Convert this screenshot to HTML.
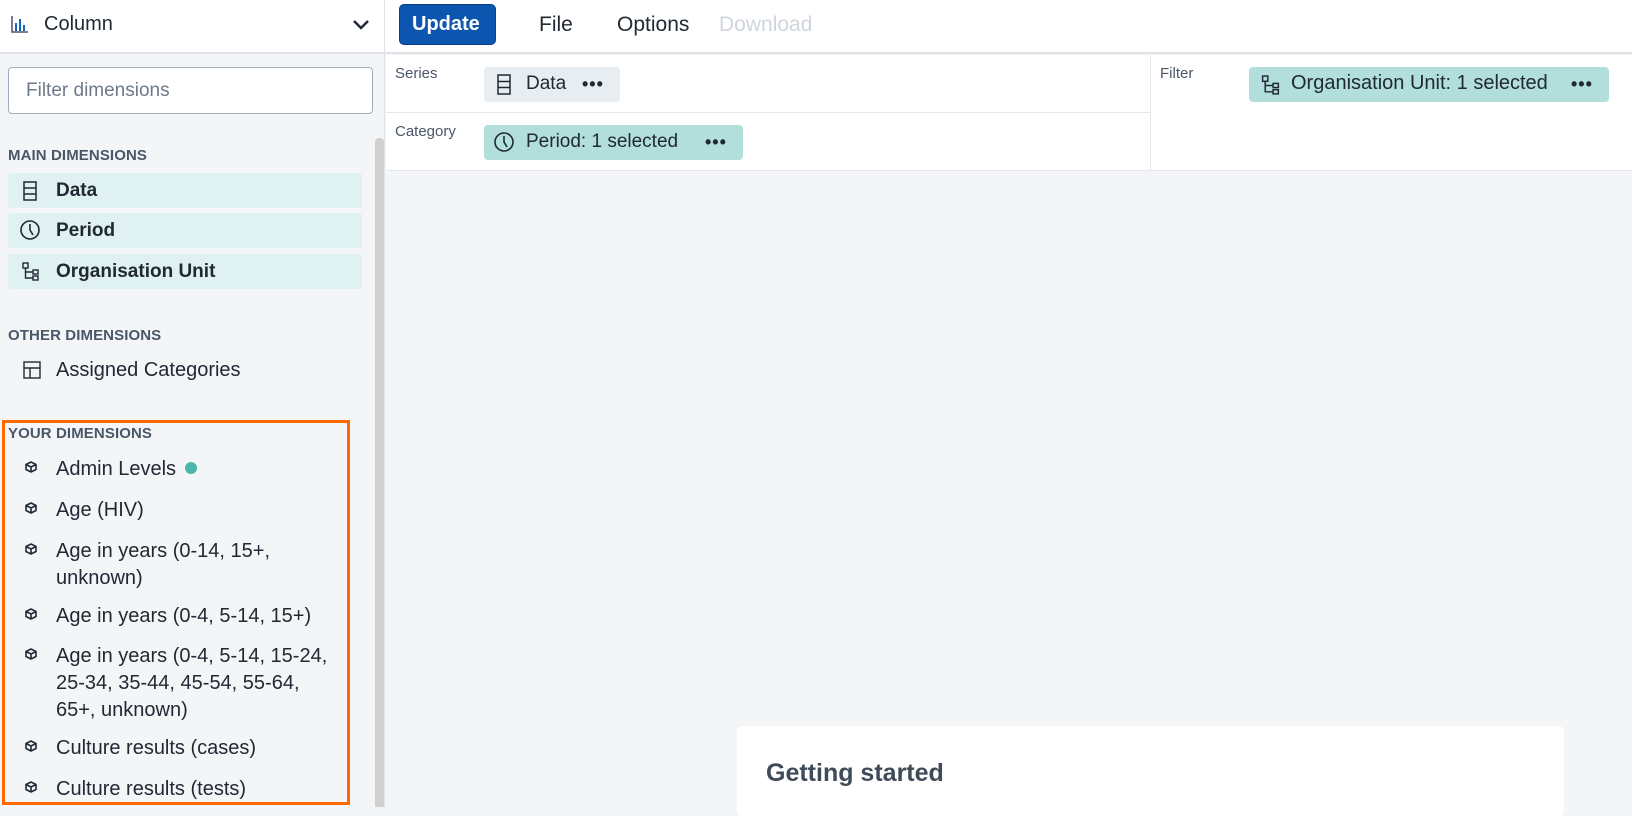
<!DOCTYPE html>
<html><head><meta charset="utf-8"><style>
*{box-sizing:border-box;margin:0;padding:0}
body{width:1632px;height:807px;overflow:hidden;font-family:"Liberation Sans",sans-serif;color:#212934;background:#f3f5f7;position:relative}
.abs{position:absolute}
.hdr{left:0;top:0;width:1632px;height:54px;background:#fff;border-bottom:2px solid #dfe3e7}
.side{left:0;top:54px;width:385px;height:753px;background:#f3f5f7;border-right:1px solid #e0e4e8}
.t{position:absolute;white-space:nowrap}
.row{position:absolute;left:8px;width:354px;height:35px;background:#e0f1f1;border-radius:3px}
.row span{position:absolute;left:48px;top:7px;font-size:19px;font-weight:bold}
.row svg{position:absolute;left:14px;top:8px}
.sec{font-size:15px;font-weight:bold;color:#4a5768;letter-spacing:.1px}
.it{position:absolute;left:56px;font-size:20px;line-height:27px;color:#212934;white-space:nowrap}
.cube{position:absolute;left:25px}
.chip{position:absolute;height:35px;border-radius:4px;font-size:19px}
.chip span{position:absolute;top:6px;left:42px;white-space:nowrap}
.dots{position:absolute;font-size:18px;font-weight:bold;letter-spacing:1px}
</style></head><body>
<div class="abs hdr"></div>
<div class="abs" style="left:384px;top:0;width:1px;height:54px;background:#dfe3e7"></div>
<svg class="abs" style="left:11px;top:15px" width="18" height="18" viewBox="0 0 18 18"><path d="M1 1V17H17" stroke="#4a5768" stroke-width="1.5" fill="none"/><rect x="4" y="8" width="2" height="8" fill="#1565c0"/><rect x="8" y="4" width="2" height="12" fill="#1565c0"/><rect x="12" y="10" width="2" height="6" fill="#1565c0"/></svg>
<div class="t" style="left:44px;top:13px;font-size:20px">Column</div>
<svg class="abs" style="left:352px;top:19px" width="18" height="12" viewBox="0 0 18 12"><path d="M2 2L9 9L16 2" stroke="#212934" stroke-width="2.5" fill="none"/></svg>
<div class="abs" style="left:399px;top:4px;width:97px;height:41px;background:#0d56b0;border-radius:5px;border:1px solid #093f85"></div>
<div class="t" style="left:412px;top:13px;font-size:20px;font-weight:bold;color:#fff">Update</div>
<div class="t" style="left:539px;top:13px;font-size:21px">File</div>
<div class="t" style="left:617px;top:13px;font-size:21px">Options</div>
<div class="t" style="left:719px;top:13px;font-size:21px;color:#cfd5dc">Download</div>

<div class="abs side"></div>
<div class="abs" style="left:8px;top:67px;width:365px;height:47px;background:#fff;border:1px solid #a0adba;border-radius:4px"></div>
<div class="t" style="left:26px;top:80px;font-size:19px;color:#6e7a8a">Filter dimensions</div>
<div class="abs" style="left:375px;top:138px;width:9px;height:669px;background:#d0d0d0;border-radius:4px 4px 0 0"></div>

<div class="t sec" style="left:8px;top:147px">MAIN DIMENSIONS</div>
<div class="row" style="top:173px"><svg width="16" height="20" viewBox="0 0 16 20"><rect x="2" y="1" width="12" height="18" fill="none" stroke="#212934" stroke-width="1.5"/><path d="M2 7H14M2 13H14" stroke="#212934" stroke-width="1.5"/></svg><span>Data</span></div>
<div class="row" style="top:213px"><svg width="22" height="22" viewBox="0 0 22 22" style="left:11px;top:6px"><circle cx="11" cy="11" r="9" fill="none" stroke="#212934" stroke-width="1.6"/><path d="M11 5V11L14 16" stroke="#212934" stroke-width="1.6" fill="none"/></svg><span>Period</span></div>
<div class="row" style="top:254px"><svg width="18" height="20" viewBox="0 0 18 20"><rect x="1" y="1" width="5" height="5" fill="none" stroke="#212934" stroke-width="1.4"/><rect x="11" y="8" width="5" height="4" fill="none" stroke="#212934" stroke-width="1.4"/><rect x="11" y="14" width="5" height="4" fill="none" stroke="#212934" stroke-width="1.4"/><path d="M3.5 6V16H11M3.5 10H11" stroke="#212934" stroke-width="1.4" fill="none"/></svg><span>Organisation Unit</span></div>

<div class="t sec" style="left:8px;top:327px">OTHER DIMENSIONS</div>
<svg class="abs" style="left:23px;top:361px" width="18" height="18" viewBox="0 0 18 18"><rect x="1" y="1" width="16" height="16" fill="none" stroke="#212934" stroke-width="1.4"/><path d="M1 7H17M7 7V17" stroke="#212934" stroke-width="1.4"/></svg>
<div class="it" style="top:357px">Assigned Categories</div>

<div class="abs" style="left:2px;top:420px;width:348px;height:385px;border:3px solid #ff6a00"></div>
<div class="t sec" style="left:8px;top:425px">YOUR DIMENSIONS</div>
<div class="it" style="top:456px">Admin Levels <span style="display:inline-block;width:12px;height:12px;border-radius:6px;background:#4db6ac;vertical-align:1px;margin-left:3px"></span></div>
<div class="it" style="top:497px">Age (HIV)</div>
<div class="it" style="top:538px">Age in years (0-14, 15+,<br>unknown)</div>
<div class="it" style="top:603px">Age in years (0-4, 5-14, 15+)</div>
<div class="it" style="top:643px">Age in years (0-4, 5-14, 15-24,<br>25-34, 35-44, 45-54, 55-64,<br>65+, unknown)</div>
<div class="it" style="top:735px">Culture results (cases)</div>
<div class="it" style="top:776px">Culture results (tests)</div>
<svg width="0" height="0" style="position:absolute"><defs><g id="cb"><path d="M6 1L11 3.5V8.5L6 11L1 8.5V3.5Z M1 3.5L6 6L11 3.5M6 6V11" fill="none" stroke="#212934" stroke-width="1.6" stroke-linejoin="round"/></g></defs></svg>
<svg class="cube" style="top:461px" width="12" height="12"><use href="#cb"/></svg>
<svg class="cube" style="top:502px" width="12" height="12"><use href="#cb"/></svg>
<svg class="cube" style="top:543px" width="12" height="12"><use href="#cb"/></svg>
<svg class="cube" style="top:608px" width="12" height="12"><use href="#cb"/></svg>
<svg class="cube" style="top:648px" width="12" height="12"><use href="#cb"/></svg>
<svg class="cube" style="top:740px" width="12" height="12"><use href="#cb"/></svg>
<svg class="cube" style="top:781px" width="12" height="12"><use href="#cb"/></svg>

<div class="abs" style="left:386px;top:55px;width:1246px;height:116px;background:#fff;border-bottom:1px solid #e5e9ed"></div>
<div class="abs" style="left:386px;top:112px;width:764px;height:1px;background:#e5e9ed"></div>
<div class="abs" style="left:1150px;top:55px;width:1px;height:116px;background:#e5e9ed"></div>
<div class="t" style="left:395px;top:65px;font-size:15px;color:#4a5768">Series</div>
<div class="t" style="left:395px;top:123px;font-size:15px;color:#4a5768">Category</div>
<div class="t" style="left:1160px;top:65px;font-size:15px;color:#4a5768">Filter</div>
<div class="chip" style="left:484px;top:67px;width:136px;background:#e8edf2"><svg class="abs" style="left:12px;top:7px" width="16" height="21" viewBox="0 0 16 21"><rect x="2" y="1" width="12" height="19" fill="none" stroke="#212934" stroke-width="1.5"/><path d="M2 7.5H14M2 13.5H14" stroke="#212934" stroke-width="1.5"/></svg><span>Data</span><span class="dots" style="left:98px;top:7px">•••</span></div>
<div class="chip" style="left:484px;top:125px;width:259px;background:#b2dfdb"><svg class="abs" style="left:9px;top:6px" width="22" height="22" viewBox="0 0 22 22"><circle cx="11" cy="11" r="9" fill="none" stroke="#212934" stroke-width="1.6"/><path d="M11 5V11L14 16" stroke="#212934" stroke-width="1.6" fill="none"/></svg><span>Period: 1 selected</span><span class="dots" style="left:221px;top:7px">•••</span></div>
<div class="chip" style="left:1249px;top:67px;width:360px;background:#b2dfdb"><svg class="abs" style="left:12px;top:8px" width="20" height="21" viewBox="0 0 18 20"><rect x="1" y="1" width="5" height="5" fill="none" stroke="#212934" stroke-width="1.4"/><rect x="11" y="8" width="5" height="4" fill="none" stroke="#212934" stroke-width="1.4"/><rect x="11" y="14" width="5" height="4" fill="none" stroke="#212934" stroke-width="1.4"/><path d="M3.5 6V16H11M3.5 10H11" stroke="#212934" stroke-width="1.4" fill="none"/></svg><span style="font-size:20px;top:5px">Organisation Unit: 1 selected</span><span class="dots" style="left:322px;top:7px">•••</span></div>

<div class="abs" style="left:737px;top:726px;width:827px;height:90px;background:#fff;border-radius:5px"></div>
<div class="t" style="left:766px;top:759px;font-size:25px;font-weight:bold;color:#404b5a">Getting started</div>
</body></html>
